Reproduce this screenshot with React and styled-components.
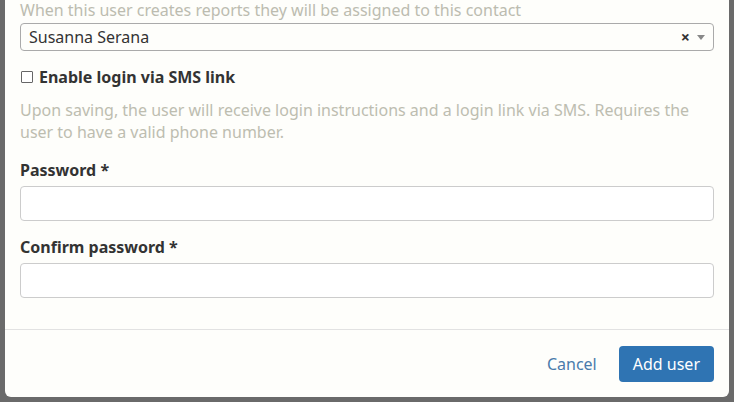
import styled, {createGlobalStyle} from 'styled-components';

const Global = createGlobalStyle`
  html,body{margin:0;padding:0;background:#6a6a6a;}
  body{font-family:"Noto Sans","Open Sans",sans-serif;}
  *{box-sizing:border-box;}
`;

/* ---------- styled ---------- */
const Backdrop = styled.div`
  width:734px;height:402px;overflow:hidden;
  background:#6a6a6a;padding:0 5px 5px 5px;
`;
const Modal = styled.div`
  height:100%;background:#fefefb;
  border-radius:0 0 6px 6px;
  display:flex;flex-direction:column;
`;
const Body = styled.div`
  padding:0 15px;flex:1;
`;
const Hint = styled.p`
  margin:0;font-size:16px;line-height:20px;color:#bcbcb0;
`;
const Select = styled.div`
  margin-top:3px;height:28px;border:1px solid #aaa;border-radius:4px;
  display:flex;align-items:center;padding:0 6px 0 8px;
  font-size:16px;color:#333;
`;
const SelectText = styled.span`flex:1;`;
const Clear = styled.span`
  font-size:16px;font-weight:700;color:#333;margin-right:7px;line-height:1;
`;
const Arrow = styled.span`
  width:0;height:0;border-left:4px solid transparent;border-right:4px solid transparent;
  border-top:5px solid #888;margin-right:2px;
`;
const CheckRow = styled.label`
  display:flex;align-items:center;gap:6px;margin-top:16px;
  font-size:16px;font-weight:700;color:#333;line-height:20px;
`;
const Box = styled.span`
  width:12px;height:12px;border:1.5px solid #666;border-radius:1px;background:#fff;
  margin-left:1px;
`;
const Help = styled.p`
  margin:12px 0 0;font-size:16px;line-height:22px;color:#bdbdb0;
`;
const Label = styled.div`
  margin-top:${p => p.$top}px;font-size:16px;font-weight:700;color:#333;line-height:20px;
`;
const Input = styled.div`
  margin-top:6px;height:35px;border:1px solid #ccc;border-radius:4px;background:#fff;
`;
const Footer = styled.div`
  border-top:1px solid #e2e2e2;height:68px;padding:0 15px;
  display:flex;align-items:center;justify-content:flex-end;gap:22px;
`;
const Cancel = styled.button`
  border:none;background:none;padding:0;cursor:pointer;
  font:inherit;font-size:16px;color:#4a7bab;
`;
const Primary = styled.button`
  border:none;border-radius:4px;background:#2f74b3;color:#fff;cursor:pointer;
  font:inherit;font-size:16px;height:36px;padding:0 14px;
`;

/* ---------- component ---------- */
export default function App() {
  return (
    <>
      <Global/>
      <Backdrop>
        <Modal>
          <Body>
            <Hint>When this user creates reports they will be assigned to this contact</Hint>
            <Select>
              <SelectText>Susanna Serana</SelectText>
              <Clear>×</Clear>
              <Arrow/>
            </Select>
            <CheckRow><Box/>Enable login via SMS link</CheckRow>
            <Help>
              Upon saving, the user will receive login instructions and a login link via SMS. Requires the
              user to have a valid phone number.
            </Help>
            <Label $top={17}>Password *</Label>
            <Input/>
            <Label $top={16}>Confirm password *</Label>
            <Input/>
          </Body>
          <Footer>
            <Cancel>Cancel</Cancel>
            <Primary>Add user</Primary>
          </Footer>
        </Modal>
      </Backdrop>
    </>
  );
}
